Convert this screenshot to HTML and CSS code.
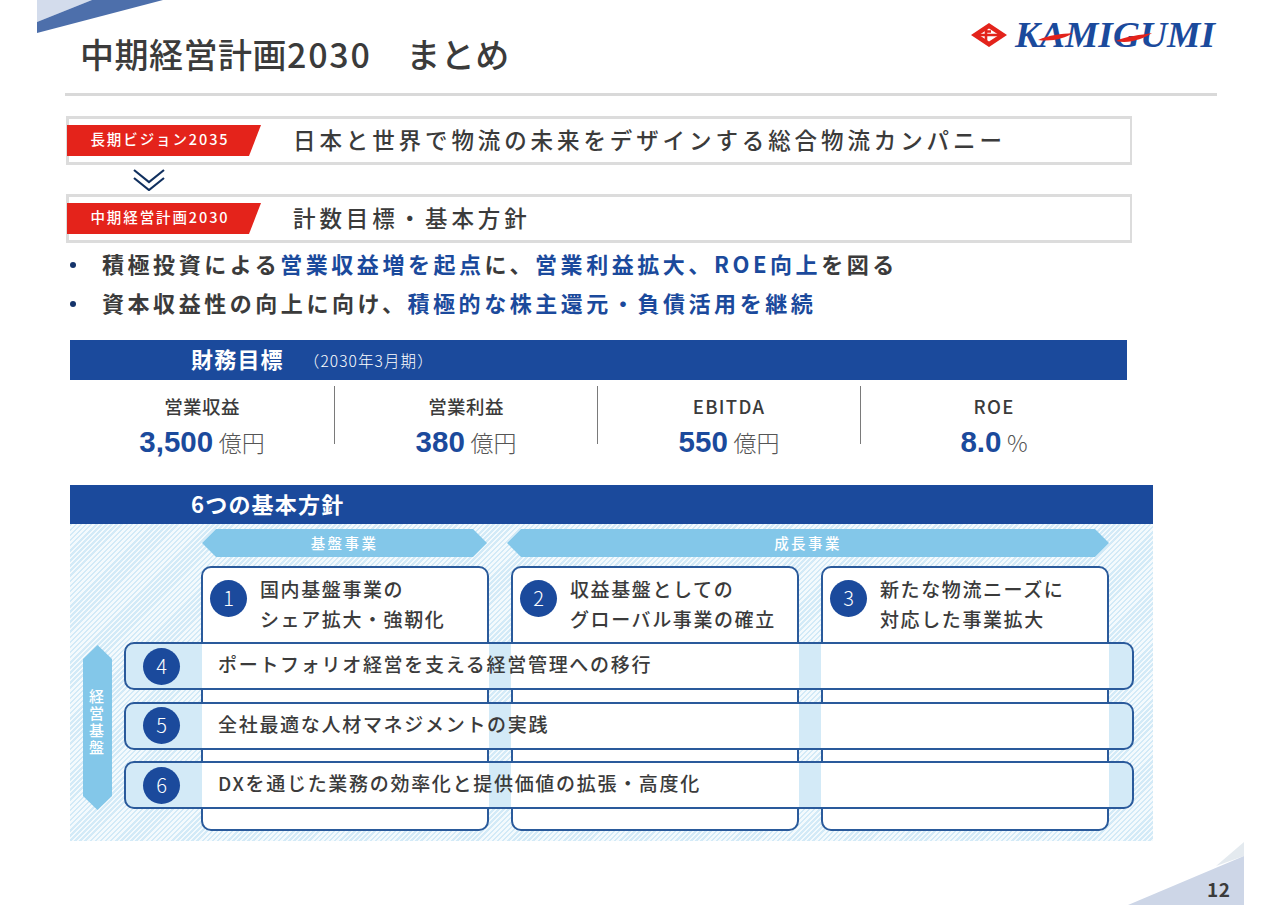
FILE: index.html
```html
<!DOCTYPE html>
<html lang="ja">
<head>
<meta charset="utf-8">
<title>中期経営計画2030 まとめ</title>
<link rel="stylesheet" href="styles.css">
</head>
<body>
<div class="slide">
  <svg class="corner-tl" width="170" height="36" viewBox="0 0 170 36">
    <polygon class="c-light" points="0,0 55,0 0,22"/>
    <polygon class="c-dark" points="0,33 0,22 55,0 126,0"/>
  </svg>
  <svg class="corner-br" width="116" height="63" viewBox="0 0 116 63">
    <polygon class="c-pale" points="88,24 116,0 116,14"/>
    <polygon class="c-soft" points="0,63 116,14 116,63"/>
  </svg>
  <span class="page-no">12</span>

  <header class="head">
    <h1 class="title">中期経営計画<span class="t-num">2030</span>　まとめ</h1>
    <svg class="logo" width="250" height="32" viewBox="0 0 250 32">
      <path class="logo-red" fill-rule="evenodd" d="M18 1L36 13L18 25L0 13ZM18 6.5L8 13L18 19.5L28 13Z"/>
      <path class="logo-red-line" d="M6 13H28M15 7V19M15 9.5H20"/>
      <text class="logo-text" x="44" y="25" textLength="200" lengthAdjust="spacingAndGlyphs">KAMIGUMI</text>
      <path class="logo-red" d="M67 18C78 13 90 12 102 11C94 16 82 20 67 18Z"/>
      <path class="logo-red" d="M145 19C155 14 170 13 181 11C172 17 158 22 145 19Z"/>
    </svg>
  </header>

  <section class="vision">
    <div class="vbox">
      <span class="tag">長期ビジョン2035</span>
      <p class="vtext">日本と世界で物流の未来をデザインする総合物流カンパニー</p>
    </div>
    <div class="chev">
      <svg width="32" height="24" viewBox="0 0 32 24">
        <path d="M1 3L16 15L31 3M1 11L16 23L31 11"/>
      </svg>
    </div>
    <div class="vbox">
      <span class="tag">中期経営計画2030</span>
      <p class="vtext">計数目標・基本方針</p>
    </div>
  </section>

  <ul class="bullets">
    <li>積極投資による<em>営業収益増を起点</em>に、<em>営業利益拡大、ROE向上</em>を図る</li>
    <li>資本収益性の向上に向け、<em>積極的な株主還元・負債活用を継続</em></li>
  </ul>

  <section class="targets">
    <div class="band band-a"><strong>財務目標</strong><small>（2030年3月期）</small></div>
    <div class="kpis">
      <div class="kpi"><span class="k-label">営業収益</span><span class="k-val"><b>3,500</b> <i>億円</i></span></div>
      <div class="kpi"><span class="k-label">営業利益</span><span class="k-val"><b>380</b> <i>億円</i></span></div>
      <div class="kpi"><span class="k-label k-latin">EBITDA</span><span class="k-val"><b>550</b> <i>億円</i></span></div>
      <div class="kpi"><span class="k-label k-latin">ROE</span><span class="k-val"><b>8.0</b> <i>%</i></span></div>
    </div>
  </section>

  <section class="policy">
    <div class="band band-b"><strong>6つの基本方針</strong></div>
    <div class="panel">
      <div class="pills">
        <span class="pill pill-a">基盤事業</span>
        <span class="pill pill-b">成長事業</span>
      </div>
      <div class="cards">
        <div class="card"><span class="num">1</span><p>国内基盤事業の<br>シェア拡大・強靭化</p></div>
        <div class="card"><span class="num">2</span><p>収益基盤としての<br>グローバル事業の確立</p></div>
        <div class="card"><span class="num">3</span><p>新たな物流ニーズに<br>対応した事業拡大</p></div>
      </div>
      <div class="side">経営基盤</div>
      <div class="rows">
        <div class="row"><span class="num">4</span><p>ポートフォリオ経営を支える経営管理への移行</p></div>
        <div class="row"><span class="num">5</span><p>全社最適な人材マネジメントの実践</p></div>
        <div class="row"><span class="num">6</span><p>DXを通じた業務の効率化と提供価値の拡張・高度化</p></div>
      </div>
    </div>
  </section>
</div>
</body>
</html>
```
FILE: styles.css
```css
* { box-sizing: border-box; }
html, body { margin: 0; padding: 0; background: #fff; }
.slide {
  position: relative;
  width: 1280px;
  height: 905px;
  overflow: hidden;
  background: #fff;
  color: #3b3b3b;
  font-family: "Noto Sans CJK JP", "Noto Sans", sans-serif;
}
p, h1, ul { margin: 0; padding: 0; }

.corner-tl { position: absolute; left: 37px; top: 0; }
.corner-br { position: absolute; left: 1128px; top: 842px; }
.c-light { fill: #d3dcec; }
.c-dark { fill: #4d6fab; }
.c-pale { fill: #e4eaef; }
.c-soft { fill: #cdd6e7; }
.page-no {
  position: absolute;
  left: 1207px;
  top: 876px;
  font-size: 19px;
  line-height: 26px;
  font-weight: 700;
  letter-spacing: .5px;
}

.head {
  position: relative;
  margin-left: 65px;
  width: 1152px;
  height: 96px;
  border-bottom: 3px solid #d9d9d9;
  padding: 31px 0 0 15px;
}
.title {
  font-size: 34px;
  line-height: 46px;
  font-weight: 500;
  letter-spacing: .5px;
  color: #3b3b3b;
}
.t-num { letter-spacing: 1.8px; }
.logo { position: absolute; left: 906px; top: 22px; overflow: visible; }
.logo-red { fill: #e3231b; }
.logo-red-line { fill: none; stroke: #e3231b; stroke-width: 2.6; }
.logo-text {
  font-family: "Liberation Serif", serif;
  font-style: italic;
  font-weight: 700;
  font-size: 35px;
  fill: #1b4a9c;
}

.vision { margin: 20px 0 0 66px; width: 1066px; }
.vbox {
  display: flex;
  align-items: center;
  height: 49px;
  border: 3px solid #dcdcdc;
  border-right-width: 2px;
}
.tag {
  flex: none;
  width: 194px;
  height: 31px;
  margin-left: -2px;
  background: #e4231b;
  clip-path: polygon(0 0, 100% 0, calc(100% - 12px) 100%, 0 100%);
  color: #fff;
  font-size: 14.5px;
  line-height: 27px;
  font-weight: 500;
  letter-spacing: 1.9px;
  text-align: center;
  padding-right: 8px;
  white-space: nowrap;
}
.vtext {
  margin-left: 32px;
  padding-bottom: 4px;
  font-size: 22.5px;
  line-height: 30px;
  font-weight: 500;
  letter-spacing: 3.9px;
  white-space: nowrap;
}
.chev { height: 29px; padding: 2px 0 0 67px; }
.chev svg { display: block; }
.chev path { fill: none; stroke: #10305f; stroke-width: 2.2; }

.bullets {
  list-style: none;
  margin: 1px 0 0 70px;
}
.bullets li {
  position: relative;
  padding-left: 32px;
  height: 39px;
  font-size: 22px;
  line-height: 39px;
  font-weight: 700;
  letter-spacing: 3.55px;
  white-space: nowrap;
  color: #3b3b3b;
}
.bullets li::before {
  content: "";
  position: absolute;
  left: 0;
  top: 18px;
  width: 6px;
  height: 6px;
  border-radius: 50%;
  background: #15346b;
}
.bullets em { font-style: normal; color: #1b4a9c; }

.targets { margin: 18px 0 0 70px; width: 1057px; }
.band {
  display: flex;
  align-items: center;
  background: #1b4a9c;
  color: #fff;
  padding-left: 121px;
  height: 40px;
}
.band-b { height: 39px; }
.band strong {
  font-size: 22px;
  line-height: 30px;
  padding-bottom: 4px;
  height: 34px;
  font-weight: 700;
  letter-spacing: 1.2px;
}
.band small {
  margin-left: 20px;
  font-size: 15.5px;
  line-height: 20px;
  padding-bottom: 1px;
  font-weight: 300;
  letter-spacing: 1.1px;
}
.kpis {
  display: grid;
  grid-template-columns: 265px 263px 263px 266px;
  padding-top: 6px;
}
.kpi {
  display: flex;
  flex-direction: column;
  align-items: center;
  height: 58px;
  border-right: 1px solid #7a7a7a;
}
.kpi:last-child { border-right: 0; }
.k-label { font-size: 18.5px; line-height: 30px; margin-top: 5px; font-weight: 500; letter-spacing: .4px; }
.k-latin { letter-spacing: 1.3px; }
.k-val { white-space: nowrap; line-height: 40px; height: 40px; margin: 1px 0 -30px; word-spacing: 2px; }
.k-val b { font-size: 29.5px; font-weight: 700; color: #1b4a9c; font-family: "Liberation Sans", "Noto Sans", sans-serif; }
.k-val i { font-style: normal; font-size: 23px; font-weight: 300; color: #555; }

.policy { margin: 41px 0 0 70px; width: 1083px; }
.panel {
  position: relative;
  height: 317px;
  padding: 5px 0 0 131px;
  background: repeating-linear-gradient(135deg, #d3eaf7 0 1.8px, #f4fafd 1.8px 3.6px);
}
.pills { display: flex; gap: 20px; height: 28px; margin-left: 1px; }
.pill {
  height: 28px;
  background: #83c7e9;
  color: #fff;
  font-size: 14.5px;
  line-height: 27px;
  font-weight: 500;
  letter-spacing: 2.4px;
  text-align: center;
  clip-path: polygon(14px 0, calc(100% - 14px) 0, 100% 50%, calc(100% - 14px) 100%, 14px 100%, 0 50%);
}
.pill-a { width: 285px; }
.pill-b { width: 602px; }
.cards {
  display: grid;
  grid-template-columns: repeat(3, 288px);
  column-gap: 22px;
  margin: 9px 0 0 0;
}
.card {
  display: flex;
  align-items: flex-start;
  height: 265px;
  border: 2px solid #2a5a9b;
  border-radius: 10px;
  background: #fff;
  padding: 6px 0 0 7px;
}
.num {
  flex: none;
  width: 37px;
  height: 37px;
  border-radius: 50%;
  background: #1b4a9c;
  color: #fff;
  font-size: 20px;
  line-height: 36px;
  font-weight: 300;
  text-align: center;
}
.card .num { margin-top: 6px; }
.card p {
  margin-left: 13px;
  font-size: 19px;
  line-height: 30px;
  font-weight: 500;
  letter-spacing: 1.6px;
  white-space: nowrap;
}
.side {
  position: absolute;
  left: 13px;
  top: 121px;
  width: 29px;
  height: 165px;
  padding: 44px 3px 0 0;
  background: #83c7e9;
  clip-path: polygon(50% 0, 100% 14px, 100% calc(100% - 14px), 50% 100%, 0 calc(100% - 14px), 0 14px);
  color: #fff;
  font-size: 15px;
  line-height: 26px;
  letter-spacing: 2px;
  font-weight: 500;
  writing-mode: vertical-rl;
  text-orientation: upright;
}
.rows {
  position: absolute;
  left: 54px;
  top: 118px;
  width: 1010px;
  display: flex;
  flex-direction: column;
  gap: 11.5px;
}
.row {
  display: flex;
  align-items: center;
  height: 48px;
  border: 2px solid #2a5a9b;
  border-radius: 10px;
  padding-left: 17px;
  background: linear-gradient(to right,
    #d3eaf7 0 76px, #fff 76px 363px,
    #d3eaf7 363px 385px, #fff 385px 673px,
    #d3eaf7 673px 695px, #fff 695px 983px,
    #d3eaf7 983px);
}
.row p {
  margin-left: 38px;
  padding-bottom: 4px;
  font-size: 19px;
  line-height: 30px;
  font-weight: 500;
  letter-spacing: 1.7px;
  white-space: nowrap;
}
```
